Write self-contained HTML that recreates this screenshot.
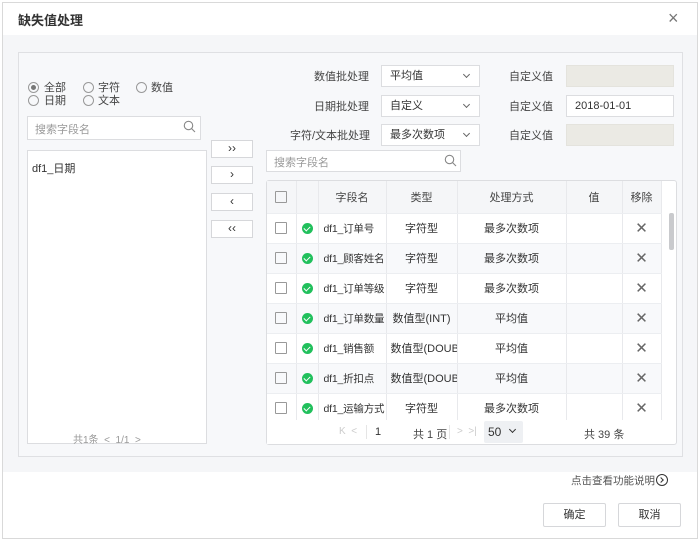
<!DOCTYPE html>
<html><head><meta charset="utf-8"><style>
*{box-sizing:border-box;margin:0;padding:0}
body{width:700px;height:542px;background:#fff;font-family:"Liberation Sans","Noto Sans CJK SC",sans-serif;font-size:11px;color:#333;position:relative;overflow:hidden}
.a{position:absolute}
.box{position:absolute;border:1px solid #dcdde0;background:#fff}
.lbl{position:absolute;font-size:11px;color:#444}
.sel{position:absolute;border:1px solid #dcdde0;background:#fff;padding-left:8px;line-height:21px;font-size:11px}
.sel i{position:absolute;right:10px;top:6px;width:5px;height:5px;border-right:1px solid #666;border-bottom:1px solid #666;transform:rotate(45deg)}
.rad{position:absolute;width:11px;height:11px;border:1px solid #999;border-radius:50%}
.btn{position:absolute;border:1px solid #d6d7da;background:#fff;text-align:center;font-size:12px;line-height:15px;color:#333}
table{border-collapse:collapse;position:absolute;left:267px;top:181px;width:394px;table-layout:fixed}
td,th{height:30px;border-right:1px solid #e8e9ec;border-bottom:1px solid #eceef1;text-align:center;font-weight:normal;font-size:11px;white-space:nowrap;overflow:hidden}
th{height:32px;background:#f5f6f8;color:#444}
tr.e td{background:#f8f9fb}
td.n{text-align:left;padding-left:5px;font-size:10.5px;letter-spacing:-0.2px}
.cb{display:inline-block;width:12px;height:12px;border:1px solid #999;border-radius:1px;vertical-align:middle}
.ok{display:inline-block;width:11px;height:11px;border-radius:50%;background:#21c05c;vertical-align:middle;position:relative}
.ok:after{content:"";position:absolute;left:3px;top:2px;width:3px;height:5px;border-right:1.5px solid #fff;border-bottom:1.5px solid #fff;transform:rotate(45deg)}
.x{color:#666;font-size:15px}
</style></head><body>
<div class="a" style="left:2px;top:2px;width:696px;height:537px;border:1px solid #d9d9d9"></div>
<div class="a" style="left:18px;top:10px;font-size:13px;font-weight:bold;color:#333">缺失值处理</div>
<div class="a" style="left:668px;top:8px;font-size:18px;color:#777">×</div>
<div class="a" style="left:3px;top:35px;width:694px;height:437px;background:#f5f6f8"></div>
<div class="a" style="left:18px;top:52px;width:665px;height:405px;border:1px solid #dfe0e3;background:#f7f8fa"></div>

<div class="rad" style="left:28px;top:82px"></div><div class="a" style="left:31px;top:85px;width:5px;height:5px;border-radius:50%;background:#777"></div>
<div class="lbl" style="left:44px;top:79px">全部</div>
<div class="rad" style="left:83px;top:82px"></div><div class="lbl" style="left:98px;top:79px">字符</div>
<div class="rad" style="left:136px;top:82px"></div><div class="lbl" style="left:151px;top:79px">数值</div>
<div class="rad" style="left:28px;top:95px"></div><div class="lbl" style="left:44px;top:92px">日期</div>
<div class="rad" style="left:83px;top:95px"></div><div class="lbl" style="left:98px;top:92px">文本</div>

<div class="box" style="left:27px;top:116px;width:174px;height:24px"></div>
<div class="lbl" style="left:35px;top:121px;color:#999">搜索字段名</div>
<svg class="a" style="left:183px;top:120px" width="13" height="13"><circle cx="5.5" cy="5.5" r="4.2" fill="none" stroke="#888" stroke-width="1.1"/><line x1="8.5" y1="8.5" x2="12" y2="12" stroke="#888" stroke-width="1.1"/></svg>
<div class="box" style="left:27px;top:150px;width:180px;height:294px"></div>
<div class="lbl" style="left:32px;top:160px;color:#333">df1_日期</div>
<div class="lbl" style="left:73px;top:431px;color:#999;font-size:10px">共1条 &nbsp;&lt; &nbsp;1/1 &nbsp;&gt;</div>

<div class="btn" style="left:211px;top:140px;width:42px;height:18px">&#8250;&#8250;</div>
<div class="btn" style="left:211px;top:166px;width:42px;height:18px">&#8250;</div>
<div class="btn" style="left:211px;top:193px;width:42px;height:18px">&#8249;</div>
<div class="btn" style="left:211px;top:220px;width:42px;height:18px">&#8249;&#8249;</div>

<div class="lbl" style="left:314px;top:68px">数值批处理</div>
<div class="lbl" style="left:314px;top:98px">日期批处理</div>
<div class="lbl" style="left:290px;top:127px">字符/文本批处理</div>
<div class="sel" style="left:381px;top:65px;width:99px;height:22px">平均值<i></i></div>
<div class="sel" style="left:381px;top:95px;width:99px;height:22px">自定义<i></i></div>
<div class="sel" style="left:381px;top:124px;width:99px;height:22px">最多次数项<i></i></div>
<div class="lbl" style="left:509px;top:68px">自定义值</div>
<div class="lbl" style="left:509px;top:98px">自定义值</div>
<div class="lbl" style="left:509px;top:127px">自定义值</div>
<div class="a" style="left:566px;top:65px;width:108px;height:22px;background:#ebeae4;border:1px solid #e4e3dd"></div>
<div class="box" style="left:566px;top:95px;width:108px;height:22px;padding-left:8px;line-height:20px;color:#333">2018-01-01</div>
<div class="a" style="left:566px;top:124px;width:108px;height:22px;background:#ebeae4;border:1px solid #e4e3dd"></div>

<div class="box" style="left:266px;top:150px;width:195px;height:22px"></div>
<div class="lbl" style="left:274px;top:154px;color:#999">搜索字段名</div>
<svg class="a" style="left:444px;top:154px" width="13" height="13"><circle cx="5.5" cy="5.5" r="4.2" fill="none" stroke="#888" stroke-width="1.1"/><line x1="8.5" y1="8.5" x2="12" y2="12" stroke="#888" stroke-width="1.1"/></svg>

<div class="box" style="left:266px;top:180px;width:411px;height:265px;border-radius:3px"></div>
<div class="a" style="left:669px;top:213px;width:5px;height:37px;background:#c9cacd;border-radius:2px"></div>
<table>
<colgroup><col style="width:29px"><col style="width:22px"><col style="width:68px"><col style="width:71px"><col style="width:109px"><col style="width:56px"><col style="width:39px"></colgroup>
<tr><th><span class="cb"></span></th><th></th><th>字段名</th><th>类型</th><th>处理方式</th><th>值</th><th>移除</th></tr>
<tr><td><span class="cb"></span></td><td><span class="ok"></span></td><td class="n">df1_订单号</td><td>字符型</td><td>最多次数项</td><td></td><td class="x">✕</td></tr>
<tr class="e"><td><span class="cb"></span></td><td><span class="ok"></span></td><td class="n">df1_顾客姓名</td><td>字符型</td><td>最多次数项</td><td></td><td class="x">✕</td></tr>
<tr><td><span class="cb"></span></td><td><span class="ok"></span></td><td class="n">df1_订单等级</td><td>字符型</td><td>最多次数项</td><td></td><td class="x">✕</td></tr>
<tr class="e"><td><span class="cb"></span></td><td><span class="ok"></span></td><td class="n">df1_订单数量</td><td>数值型(INT)</td><td>平均值</td><td></td><td class="x">✕</td></tr>
<tr><td><span class="cb"></span></td><td><span class="ok"></span></td><td class="n">df1_销售额</td><td style="text-align:left;padding-left:4px">数值型(DOUBLE)</td><td>平均值</td><td></td><td class="x">✕</td></tr>
<tr class="e"><td><span class="cb"></span></td><td><span class="ok"></span></td><td class="n">df1_折扣点</td><td style="text-align:left;padding-left:4px">数值型(DOUBLE)</td><td>平均值</td><td></td><td class="x">✕</td></tr>
<tr><td><span class="cb"></span></td><td><span class="ok"></span></td><td class="n">df1_运输方式</td><td>字符型</td><td>最多次数项</td><td></td><td class="x">✕</td></tr>
</table>
<div class="a" style="left:267px;top:420px;width:400px;height:24px;background:#fff"></div>
<div class="lbl" style="left:339px;top:426px;color:#ccc;font-size:10px">K &nbsp;&lt;</div>
<div class="a" style="left:366px;top:425px;width:1px;height:14px;background:#e5e5e5"></div>
<div class="lbl" style="left:375px;top:426px;color:#333">1</div>
<div class="lbl" style="left:413px;top:426px">共 1 页</div>
<div class="a" style="left:449px;top:425px;width:1px;height:14px;background:#e5e5e5"></div>
<div class="lbl" style="left:457px;top:426px;color:#ccc;font-size:10px">&gt; &nbsp;&gt;|</div>
<div class="a" style="left:484px;top:421px;width:39px;height:22px;background:#eef0f3;border-radius:2px;padding-left:4px;line-height:22px;font-size:12px">50</div>
<div class="a" style="left:510px;top:427px;width:5px;height:5px;border-right:1.5px solid #333;border-bottom:1.5px solid #333;transform:rotate(45deg)"></div>
<div class="lbl" style="left:584px;top:426px">共 39 条</div>

<div class="lbl" style="left:571px;top:473px;color:#555;font-size:10.5px">点击查看功能说明</div>
<div class="a" style="left:656px;top:474px;width:12px;height:12px;border:1.3px solid #333;border-radius:50%"></div>
<div class="a" style="left:659px;top:478px;width:4px;height:4px;border-right:1.3px solid #333;border-top:1.3px solid #333;transform:rotate(45deg)"></div>
<div class="btn" style="left:543px;top:503px;width:63px;height:24px;line-height:22px;font-size:11px;border-radius:2px">确定</div>
<div class="btn" style="left:618px;top:503px;width:63px;height:24px;line-height:22px;font-size:11px;border-radius:2px">取消</div>
</body></html>
